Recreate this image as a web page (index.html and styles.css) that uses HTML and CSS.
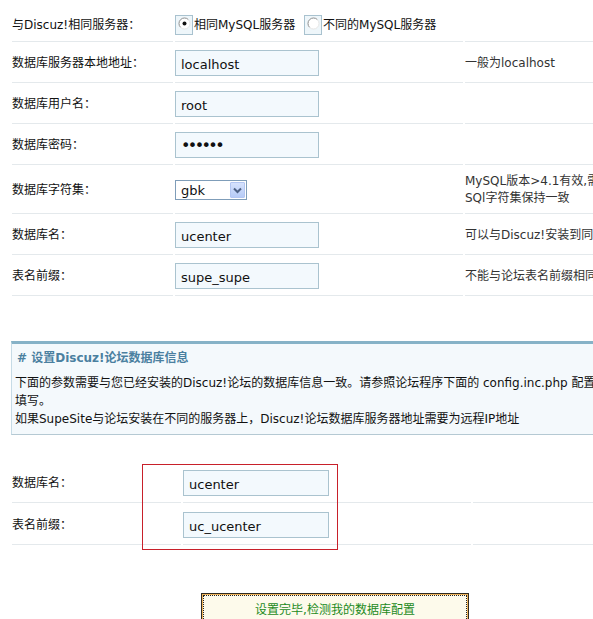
FILE: index.html
```html
<!DOCTYPE html>
<html lang="zh-CN">
<head>
<meta charset="utf-8">
<title>数据库配置</title>
<link rel="stylesheet" href="styles.css">
</head>
<body>
<div class="page">
  <table class="form">
    <colgroup><col class="c-label"><col class="c-field"><col class="c-note"></colgroup>
    <tr class="first">
      <th>与Discuz!相同服务器：</th>
      <td>
        <label class="radio"><span class="rbox"><svg width="13" height="13" viewBox="0 0 13 13"><circle cx="6.5" cy="6.5" r="5.5" fill="#fff"/><path d="M2.6 10.4A5.5 5.5 0 0 1 10.4 2.6" fill="none" stroke="#8d8d8d" stroke-width="1"/><path d="M10.4 2.6A5.5 5.5 0 0 1 2.6 10.4" fill="none" stroke="#e6e6e6" stroke-width="1"/><circle cx="6.5" cy="6.5" r="2" fill="#111"/></svg></span>相同MySQL服务器</label>
        <label class="radio"><span class="rbox"><svg width="13" height="13" viewBox="0 0 13 13"><circle cx="6.5" cy="6.5" r="5.5" fill="#fff"/><path d="M2.6 10.4A5.5 5.5 0 0 1 10.4 2.6" fill="none" stroke="#8d8d8d" stroke-width="1"/><path d="M10.4 2.6A5.5 5.5 0 0 1 2.6 10.4" fill="none" stroke="#e6e6e6" stroke-width="1"/></svg></span>不同的MySQL服务器</label>
      </td>
      <td class="note"></td>
    </tr>
    <tr>
      <th>数据库服务器本地地址：</th>
      <td><input class="txt" type="text" value="localhost"></td>
      <td class="note">一般为localhost</td>
    </tr>
    <tr>
      <th>数据库用户名：</th>
      <td><input class="txt" type="text" value="root"></td>
      <td class="note"></td>
    </tr>
    <tr>
      <th>数据库密码：</th>
      <td><input class="txt pwd" type="password" value="123456"></td>
      <td class="note"></td>
    </tr>
    <tr class="tall">
      <th>数据库字符集：</th>
      <td>
        <div class="select"><span class="sel-val">gbk</span><span class="sel-btn"><svg width="9" height="7" viewBox="0 0 9 7"><path d="M1 1.5L4.5 5L8 1.5" fill="none" stroke="#4d6185" stroke-width="2"/></svg></span></div>
      </td>
      <td class="note">MySQL版本&gt;4.1有效,需要与Discuz!的My<br>SQl字符集保持一致</td>
    </tr>
    <tr>
      <th>数据库名：</th>
      <td><input class="txt" type="text" value="ucenter"></td>
      <td class="note">可以与Discuz!安装到同一数据库</td>
    </tr>
    <tr>
      <th>表名前缀：</th>
      <td><input class="txt" type="text" value="supe_supe"></td>
      <td class="note">不能与论坛表名前缀相同</td>
    </tr>
  </table>

  <div class="msg">
    <h4># 设置Discuz!论坛数据库信息</h4>
    <p>下面的参数需要与您已经安装的Discuz!论坛的数据库信息一致。请参照论坛程序下面的 config.inc.php 配置文件填写。</p>
    <p>如果SupeSite与论坛安装在不同的服务器上，Discuz!论坛数据库服务器地址需要为远程IP地址</p>
  </div>

  <div class="form2-wrap">
    <table class="form form2">
      <colgroup><col class="c-label2"><col class="c-field2"><col class="c-note2"></colgroup>
      <tr>
        <th>数据库名：</th>
        <td><input class="txt wide" type="text" value="ucenter"></td>
        <td class="note"></td>
      </tr>
      <tr>
        <th>表名前缀：</th>
        <td><input class="txt wide" type="text" value="uc_ucenter"></td>
        <td class="note"></td>
      </tr>
    </table>
    <div class="highlight"></div>
  </div>

  <div class="actions">
    <button class="btn" type="button"><span class="btn-in">设置完毕,检测我的数据库配置</span></button>
  </div>
</div>
</body>
</html>
```

FILE: styles.css
```css
* { box-sizing: border-box; }
html, body { margin: 0; overflow: hidden; background: #fff; }
body {
  padding-left: 10px;
  font-family: "DejaVu Sans", "Noto Sans CJK SC", sans-serif;
  font-size: 12px;
  color: #111;
}
.page { width: 650px; }

.form {
  border-collapse: separate;
  border-spacing: 2px 0;
  width: 652px;
  table-layout: fixed;
}
.c-label { width: 161px; }
.c-field { width: 288px; }
.c-label2 { width: 169px; }
.c-field2 { width: 288px; }
.form th, .form td {
  border-bottom: 1px solid #e4e9ec;
  padding: 8px 0 6px;
  vertical-align: middle;
  text-align: left;
  font-weight: normal;
  line-height: 17px;
  white-space: nowrap;
}
.form tr.first th, .form tr.first td { padding: 15px 0 6px; }
.form .note { color: #333; }

.radio { display: inline-flex; align-items: center; margin-right: 5px; }
.rbox {
  display: inline-flex;
  width: 18px;
  height: 20px;
  border: 1px solid #a9c2cf;
  background: #eef6fa;
  padding: 1px 0 0 2px;
  margin-right: 1px;
}
.rbox svg { display: block; }

.txt {
  display: block;
  width: 144px;
  height: 26px;
  margin: 0;
  border: 1px solid #aac3cf;
  background: #f3f9fd;
  padding: 3px 5px 0;
  font-family: "DejaVu Sans", "Noto Sans CJK SC", sans-serif;
  font-size: 13px;
  color: #111;
}
.txt.wide { width: 146px; }
.pwd { font-size: 16px; letter-spacing: -2.6px; padding-top: 1px; }

.select {
  display: flex;
  align-items: center;
  width: 72px;
  height: 20px;
  border: 1px solid #7f9db9;
  background: #fff;
  padding: 1px;
}
.sel-val { flex: 1; padding-left: 4px; font-size: 13px; }
.sel-btn {
  width: 15px;
  height: 16px;
  display: flex;
  align-items: center;
  justify-content: center;
  background: linear-gradient(#d6e2fd, #b6cbf7);
  border: 1px solid #b3c6f2;
  border-radius: 1px;
}

.msg {
  margin-top: 45px;
  margin-left: 1px;
  width: 648px;
  border: 1px solid #c6dbe6;
  border-top: 3px solid #86b2c7;
  border-bottom-color: #b5c9d3;
  background: #f4f9fc;
  padding: 5px 36px 6px 3px;
}
.msg h4 {
  margin: 0 0 7px;
  font-size: 12px;
  line-height: 18px;
  font-weight: bold;
  color: #4b80a0;
  padding-left: 2px;
}
.msg p { margin: 0; line-height: 18px; color: #111; }

.form2-wrap { position: relative; margin-top: 26px; }
.form2 th, .form2 td { padding: 9px 0 6px; }
.highlight {
  position: absolute;
  left: 132px;
  top: 3px;
  width: 196px;
  height: 86px;
  border: 1px solid #c8202a;
  pointer-events: none;
}

.actions {
  display: flex;
  justify-content: center;
  width: 650px;
  margin-top: 48px;
}
.btn {
  width: 268px;
  height: 30px;
  padding: 1px;
  margin: 0;
  border: 1px solid #2e2a22;
  background: #f0b45a;
  font: inherit;
  cursor: pointer;
  display: block;
}
.btn-in {
  display: flex;
  align-items: center;
  justify-content: center;
  height: 100%;
  border: 1px dotted #222;
  background: #fdfaeb;
  color: #1c8a1c;
  font-size: 12px;
}
```
